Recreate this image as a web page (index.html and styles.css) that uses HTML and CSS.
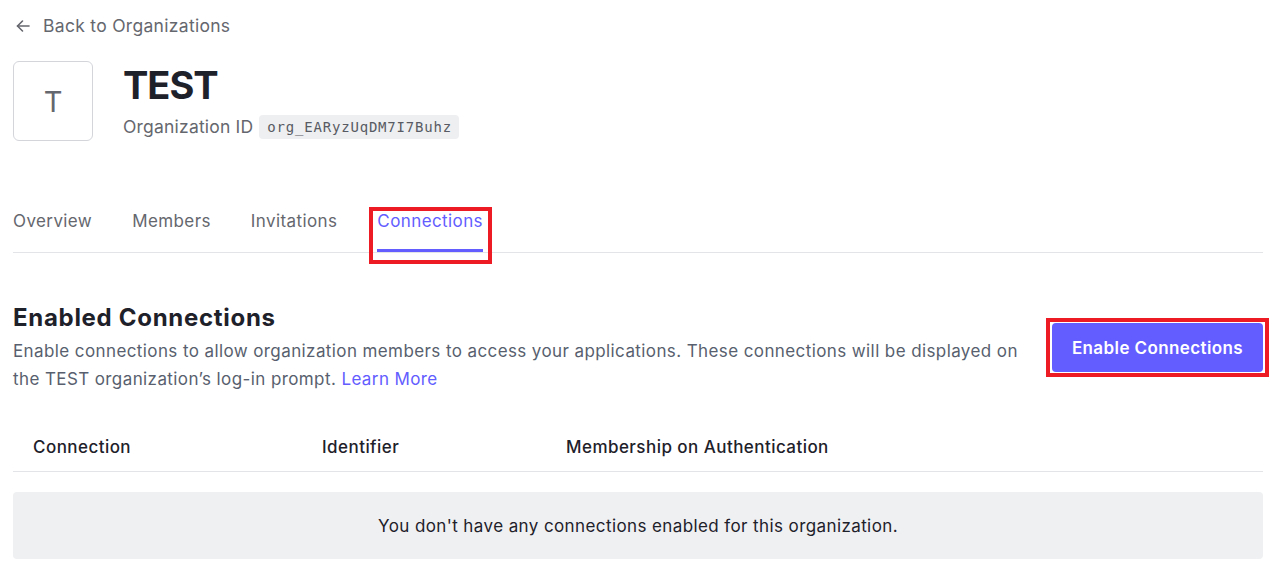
FILE: index.html
```html
<!DOCTYPE html>
<html lang="en">
<head>
<meta charset="utf-8">
<title>TEST - Organization</title>
<link rel="stylesheet" href="styles.css">
</head>
<body>
<div class="page">
  <a class="back" href="#">
    <svg class="back-icon" width="18" height="18" viewBox="0 0 18 18" fill="none" stroke="currentColor" stroke-width="1.6" stroke-linecap="round" stroke-linejoin="round"><path d="M15 9H3.5"/><path d="M8.5 4L3.5 9l5 5"/></svg>
    <span>Back to Organizations</span>
  </a>

  <header class="org-header">
    <div class="avatar">T</div>
    <div class="org-info">
      <h1 class="org-name">TEST</h1>
      <div class="org-id-row">
        <span class="org-id-label">Organization ID</span>
        <code class="org-id">org_EARyzUqDM7I7Buhz</code>
      </div>
    </div>
  </header>

  <nav class="tabs">
    <a class="tab" href="#">Overview</a>
    <a class="tab" href="#">Members</a>
    <a class="tab" href="#">Invitations</a>
    <a class="tab tab-active" href="#">Connections<span class="highlight highlight-tab"></span></a>
  </nav>

  <section class="section">
    <div class="section-head">
      <div class="section-text">
        <h2 class="section-title">Enabled Connections</h2>
        <p class="section-desc">Enable connections to allow organization members to access your applications. These connections will be displayed on the TEST organization’s log-in prompt. <a class="link" href="#">Learn More</a></p>
      </div>
      <div class="btn-wrap">
        <button class="btn-primary">Enable Connections</button>
        <span class="highlight highlight-btn"></span>
      </div>
    </div>

    <div class="table">
      <div class="table-head">
        <div class="th">Connection</div>
        <div class="th">Identifier</div>
        <div class="th">Membership on Authentication</div>
      </div>
      <div class="empty">You don't have any connections enabled for this organization.</div>
    </div>
  </section>
</div>
</body>
</html>
```

FILE: styles.css
```css
* { box-sizing: border-box; }
html, body { margin: 0; padding: 0; background: #fff; }
body {
  font-family: Inter, "Noto Sans", Arial, sans-serif;
  color: #1e212a;
  font-size: 17px;
  letter-spacing: 0.3px;
}
.page {
  padding: 14px 17px 0 13px;
}
.back {
  display: inline-flex;
  align-items: center;
  gap: 11px;
  color: #65676e;
  text-decoration: none;
  line-height: 24px;
  font-size: 17.5px;
}
.back-icon { margin-left: 1px; color: #65676e; }

.org-header {
  display: flex;
  align-items: flex-start;
  gap: 30px;
  margin-top: 22px;
}
.avatar {
  width: 80px;
  height: 80px;
  border: 1px solid #d3d5da;
  border-radius: 6px;
  display: flex;
  align-items: center;
  justify-content: center;
  font-size: 29px;
  color: #65676e;
  letter-spacing: 0;
}
.org-info { display: flex; flex-direction: column; }
.org-name {
  margin: 0;
  font-size: 38px;
  line-height: 48px;
  font-weight: 700;
  color: #1e212a;
  letter-spacing: -1px;
}
.org-id-row {
  display: flex;
  align-items: center;
  gap: 6px;
  margin-top: 6px;
}
.org-id-label {
  font-size: 17.5px;
  color: #65676e;
  line-height: 24px;
  letter-spacing: 0.2px;
}
.org-id {
  font-family: "DejaVu Sans Mono", "Liberation Mono", monospace;
  font-size: 14px;
  letter-spacing: 0.8px;
  background: #eeeff1;
  color: #585b63;
  border-radius: 4px;
  padding: 0 7px 0 8px;
  line-height: 24px;
  height: 24px;
}

.tabs {
  display: flex;
  gap: 40px;
  margin-top: 68px;
  border-bottom: 1px solid #e3e4e7;
}
.tab {
  position: relative;
  color: #65676e;
  text-decoration: none;
  line-height: 24px;
  padding-bottom: 16px;
  border-bottom: 3px solid transparent;
  font-size: 17px;
  letter-spacing: 0.4px;
}
.tab-active {
  color: #635dff;
  border-bottom-color: #635dff;
}
.highlight {
  position: absolute;
  border: 4px solid #ed1c24;
  pointer-events: none;
}
.highlight-tab {
  left: -8px;
  right: -9px;
  top: -2px;
  bottom: -15px;
}

.section { margin-top: 50px; }
.section-head {
  display: flex;
  align-items: flex-start;
  gap: 32px;
}
.section-text { flex: 1; }
.section-title {
  margin: 0;
  font-size: 24px;
  line-height: 30px;
  font-weight: 700;
  color: #1e212a;
  letter-spacing: 0.7px;
}
.section-desc {
  margin: 4px 0 0;
  font-size: 17px;
  line-height: 28px;
  color: #585f6e;
  letter-spacing: 0.4px;
}
.link { color: #635dff; text-decoration: none; }

.btn-wrap { position: relative; flex: none; margin-top: 20px; }
.btn-primary {
  display: block;
  width: 211px;
  height: 49px;
  border: none;
  border-radius: 4px;
  background: #635dff;
  color: #fff;
  font-family: Inter, "Noto Sans", Arial, sans-serif;
  font-size: 17px;
  font-weight: 600;
  letter-spacing: 0.4px;
  cursor: pointer;
}
.highlight-btn {
  left: -6px;
  right: -6px;
  top: -5px;
  bottom: -5px;
}

.table { margin-top: 29px; }
.table-head {
  display: grid;
  grid-template-columns: 289px 244px 1fr;
  padding: 13px 20px 12px;
  border-bottom: 1px solid #e3e4e7;
}
.th {
  font-size: 17px;
  line-height: 24px;
  font-weight: 500;
  color: #1e212a;
  letter-spacing: 0.45px;
}
.empty {
  margin-top: 20px;
  background: #eff0f2;
  border-radius: 4px;
  padding: 22px 20px 21px;
  text-align: center;
  line-height: 24px;
  font-size: 17px;
  color: #1e212a;
  letter-spacing: 0.4px;
}
```
